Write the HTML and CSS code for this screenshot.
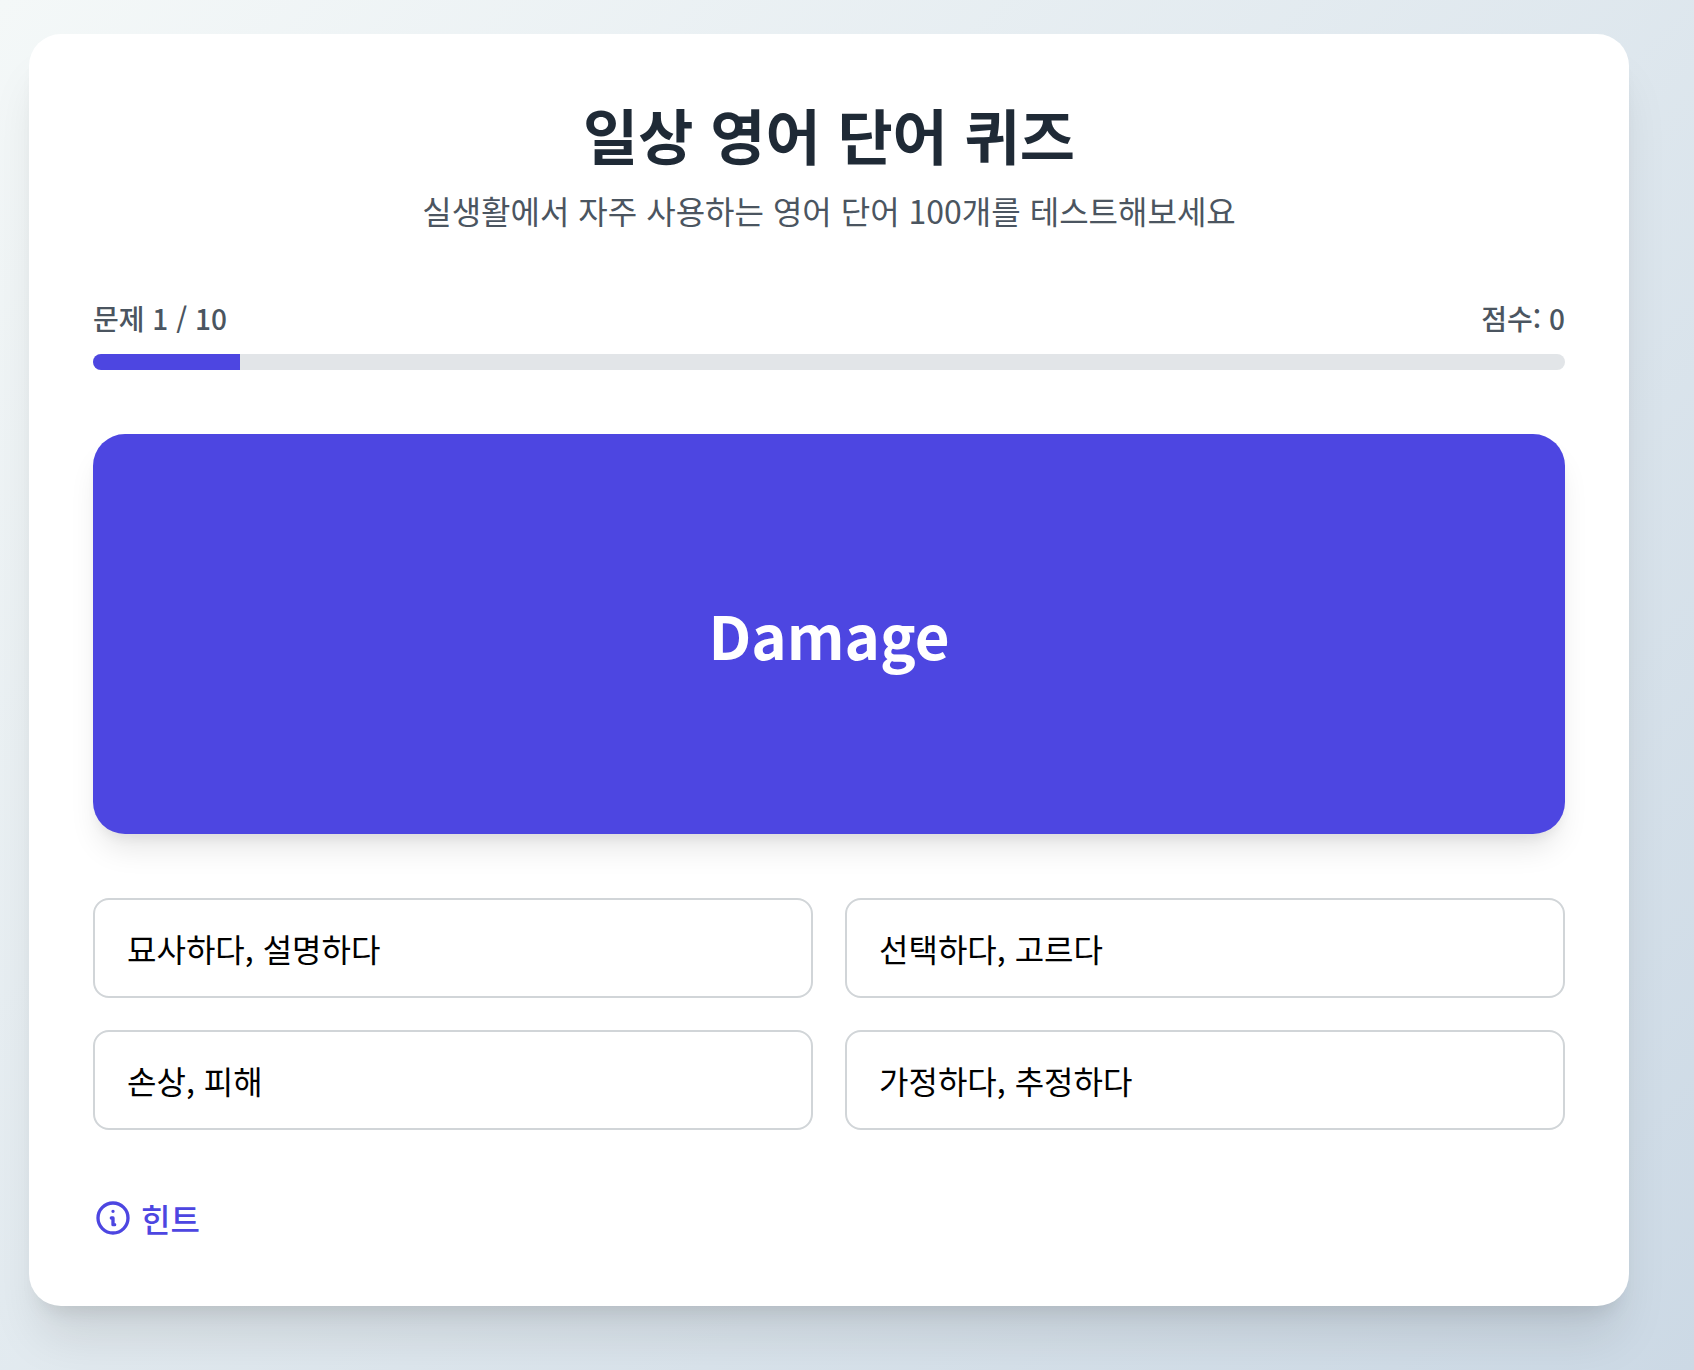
FILE: index.html
```html
<!DOCTYPE html>
<html lang="ko">
<head>
    <meta charset="utf-8">
    <meta name="viewport" content="width=device-width, initial-scale=1">
    <title>일상 영어 단어 퀴즈</title>
    <link rel="stylesheet" href="styles.css">
</head>
<body>
<main class="quiz">
    <header class="quiz-header">
        <h1>일상 영어 단어 퀴즈</h1>
        <p>실생활에서 자주 사용하는 영어 단어 100개를 테스트해보세요</p>
    </header>

    <div class="status">
        <span>문제 1 / 10</span>
        <span>점수: 0</span>
    </div>
    <div class="progress">
        <div class="progress-bar" style="width: 10%"></div>
    </div>

    <div class="word-card">
        <h2>Damage</h2>
    </div>

    <div class="options">
        <button type="button" class="option">묘사하다, 설명하다</button>
        <button type="button" class="option">선택하다, 고르다</button>
        <button type="button" class="option">손상, 피해</button>
        <button type="button" class="option">가정하다, 추정하다</button>
    </div>

    <button type="button" class="hint">
        <svg class="hint-icon" viewBox="0 0 24 24" fill="none" stroke="currentColor" stroke-width="2" stroke-linecap="round" stroke-linejoin="round" aria-hidden="true">
            <path d="M13 16h-1v-4h-1m1-4h.01M21 12a9 9 0 11-18 0 9 9 0 0118 0z"/>
        </svg>
        힌트
    </button>
</main>
</body>
</html>
```
FILE: styles.css
```css
* {
    margin: 0;
    padding: 0;
    box-sizing: border-box;
}

body {
    min-height: 100vh;
    padding: 34px 65px 64px 29px;
    background: linear-gradient(135deg, #f4f8f8, #ccd9e5);
    font-family: "Noto Sans CJK KR", sans-serif;
    font-size: 32px;
    line-height: 48px;
}

button {
    background: none;
    border: none;
    font: inherit;
    cursor: pointer;
}

.quiz {
    max-width: 1600px;
    margin: 0 auto;
    padding: 64px;
    background: #fff;
    border-radius: 32px;
    box-shadow: 0 40px 50px -10px rgba(0, 0, 0, 0.1), 0 16px 20px -12px rgba(0, 0, 0, 0.1);
}

.quiz-header {
    margin-bottom: 64px;
    text-align: center;
}

.quiz-header h1 {
    margin-bottom: 16px;
    font-size: 60px;
    line-height: 72px;
    font-weight: 700;
    color: #1f2a36;
}

.quiz-header p {
    color: #4b5560;
}

.status {
    display: flex;
    justify-content: space-between;
    margin-bottom: 16px;
    font-size: 28px;
    line-height: 40px;
    font-weight: 500;
    color: #4b5560;
}

.progress {
    height: 16px;
    margin-bottom: 64px;
    background: #e2e5e8;
    border-radius: 8px;
    overflow: hidden;
}

.progress-bar {
    height: 100%;
    background: #4d46e1;
}

.word-card {
    display: flex;
    align-items: center;
    justify-content: center;
    min-height: 400px;
    margin-bottom: 64px;
    background: #4d46e1;
    border-radius: 32px;
    box-shadow: 0 20px 30px -6px rgba(0, 0, 0, 0.1), 0 8px 12px -4px rgba(0, 0, 0, 0.06);
}

.word-card h2 {
    font-size: 60px;
    line-height: 72px;
    font-weight: 700;
    color: #fff;
}

.options {
    display: grid;
    grid-template-columns: 1fr 1fr;
    gap: 32px;
    margin-bottom: 64px;
}

.option {
    padding: 24px 32px;
    border: 2px solid #d1d5d8;
    border-radius: 16px;
    text-align: left;
    color: #000;
}

.option:hover {
    background: #f9fafb;
}

.hint {
    display: flex;
    align-items: center;
    gap: 8px;
    font-weight: 500;
    color: #4d46e1;
}

.hint-icon {
    width: 40px;
    height: 40px;
}
```
